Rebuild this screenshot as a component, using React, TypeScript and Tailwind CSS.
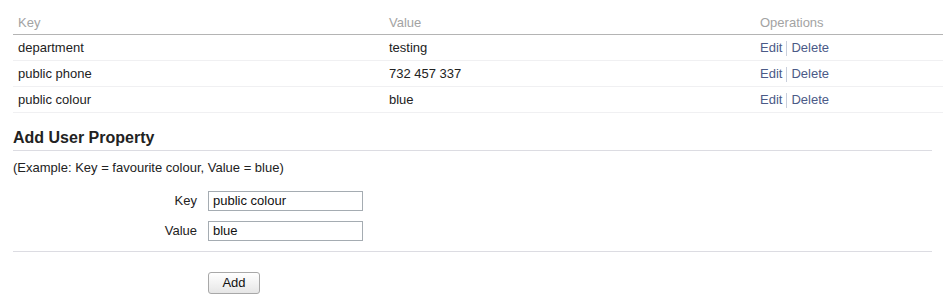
const rows = [
  { key: "department", value: "testing" },
  { key: "public phone", value: "732 457 337" },
  { key: "public colour", value: "blue" },
];

function Field({ label, value }: { label: string; value: string }) {
  return (
    <div className="flex items-center">
      <label className="w-[184px] text-right text-[13px] text-[#222]">{label}</label>
      <input
        defaultValue={value}
        className="ml-[11px] h-[20px] w-[155px] border border-[#a5acb2] bg-white px-[4px] text-[13px] text-[#111] outline-none"
      />
    </div>
  );
}

export default function App() {
  return (
    <div className="min-h-[305px] bg-white pl-[13px] pt-[10px] pr-[9px] font-['Liberation_Sans',Arial,sans-serif] text-[13px] text-[#222]">
      <table className="w-[930px] border-collapse">
        <thead>
          <tr className="h-[24px] border-b border-[#b4b4b4] text-left text-[#a3a3a3]">
            <th className="w-[371px] pl-[5px] pt-[1px] align-middle font-normal">Key</th>
            <th className="w-[371px] pl-[5px] pt-[1px] align-middle font-normal">Value</th>
            <th className="pl-[5px] pt-[1px] align-middle font-normal">Operations</th>
          </tr>
        </thead>
        <tbody>
          {rows.map((r) => (
            <tr key={r.key} className="h-[26px] border-b border-[#f0f0f2]">
              <td className="pl-[5px] pt-[2px]">{r.key}</td>
              <td className="pl-[5px] pt-[2px]">{r.value}</td>
              <td className="pl-[5px] pt-[2px]">
                <span className="flex items-center text-[#4b5a87]">
                  <a className="cursor-pointer">Edit</a>
                  <span className="mx-[4px] h-[15px] w-px bg-[#c9cfdc]" />
                  <a className="cursor-pointer">Delete</a>
                </span>
              </td>
            </tr>
          ))}
        </tbody>
      </table>

      <h2 className="mt-[15px] w-[919px] border-b border-[#dcdce2] pb-[2px] text-[16px] leading-[20px] font-bold text-[#222]">
        Add User Property
      </h2>
      <p className="mt-[9px] leading-[16px]">(Example: Key = favourite colour, Value = blue)</p>

      <div className="mt-[15px] flex flex-col gap-[10px]">
        <Field label="Key" value="public colour" />
        <Field label="Value" value="blue" />
      </div>

      <div className="mt-[10px] w-[919px] border-b border-[#dcdce2]" />

      <div className="mt-[20px] pl-[195px]">
        <button className="h-[22px] w-[52px] rounded-[3px] border border-[#a8a8a8] bg-gradient-to-b from-white to-[#e6e6e6] text-[13px] text-[#111]">
          Add
        </button>
      </div>
    </div>
  );
}
